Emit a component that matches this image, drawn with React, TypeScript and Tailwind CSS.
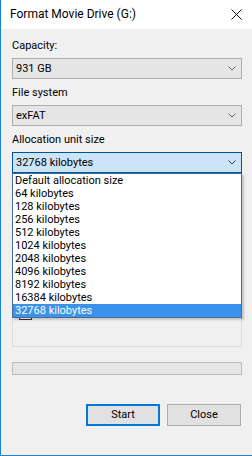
import React from "react";

const items = [
  "Default allocation size",
  "64 kilobytes",
  "128 kilobytes",
  "256 kilobytes",
  "512 kilobytes",
  "1024 kilobytes",
  "2048 kilobytes",
  "4096 kilobytes",
  "8192 kilobytes",
  "16384 kilobytes",
  "32768 kilobytes",
];

function Chevron({ color = "#606060" }: { color?: string }) {
  return (
    <svg width="8" height="5" viewBox="0 0 8 5" className="block">
      <path d="M0.5 0.5 L4 4 L7.5 0.5" fill="none" stroke={color} strokeWidth="1" />
    </svg>
  );
}

function Combo({ value, active = false }: { value: string; active?: boolean }) {
  return (
    <div
      className={
        active
          ? "h-[21px] flex items-center justify-between pl-[3px] pr-[5px] border border-[#005499] bg-[#cce4f7]"
          : "h-[21px] flex items-center justify-between pl-[3px] pr-[5px] border border-[#adadad] bg-[#e5e5e5]"
      }
    >
      <span className="leading-[15px]">{value}</span>
      <Chevron color={active ? "#404040" : "#606060"} />
    </div>
  );
}

export default function App() {
  return (
    <div
      className="w-[252px] h-[456px] flex flex-col border-l border-b border-[#1883d7] bg-[#f0f0f0] text-black text-[11px]"
      style={{ fontFamily: 'Roboto, "Liberation Sans", sans-serif' }}
    >
      <div className="h-[29px] shrink-0 bg-white flex items-center justify-between pl-[9px] pr-[10px]">
        <span className="text-[12px] leading-[15px]">Format Movie Drive (G:)</span>
        <svg width="11" height="11" viewBox="0 0 11 11" className="block">
          <path d="M0.5 0.5 L10.5 10.5 M10.5 0.5 L0.5 10.5" stroke="#111" strokeWidth="1" />
        </svg>
      </div>
      <div className="flex flex-col pl-[11px] pr-[10px] pt-[9px]">
        <div className="leading-[15px] mb-[5px]">Capacity:</div>
        <Combo value="931 GB" />
        <div className="leading-[15px] mt-[6px] mb-[5px]">File system</div>
        <Combo value="exFAT" />
        <div className="leading-[15px] mt-[6px] mb-[5px]">Allocation unit size</div>
        <div className="relative">
          <Combo value="32768 kilobytes" active />
          <div className="absolute left-0 top-full w-[230px] z-10 bg-white border border-[#4a6a8f] shadow-[2px_2px_2px_rgba(0,0,0,0.18)]">
            {items.map((it) => (
              <div
                key={it}
                className={
                  it === "32768 kilobytes"
                    ? "h-[13px] leading-[13px] pl-[2px] bg-[#3a92ea] text-white"
                    : "h-[13px] leading-[13px] pl-[2px]"
                }
              >
                {it}
              </div>
            ))}
          </div>
        </div>
        <div className="mt-[10px] h-[164px] border border-[#dcdcdc] flex flex-col justify-end pb-[26px] pl-[6px]">
          <div className="w-[13px] h-[13px] border border-[#333] bg-white" />
        </div>
        <div className="mt-[15px] h-[13px] border border-[#bcbcbc] bg-[#e6e6e6]" />
        <div className="mt-[29px] flex justify-end gap-[7px] pr-[1px]">
          <div className="w-[74px] h-[22px] flex items-center justify-center border-2 border-[#0078d7] bg-[#e1e1e1]">
            Start
          </div>
          <div className="w-[74px] h-[22px] flex items-center justify-center border border-[#adadad] bg-[#e1e1e1]">
            Close
          </div>
        </div>
      </div>
    </div>
  );
}
